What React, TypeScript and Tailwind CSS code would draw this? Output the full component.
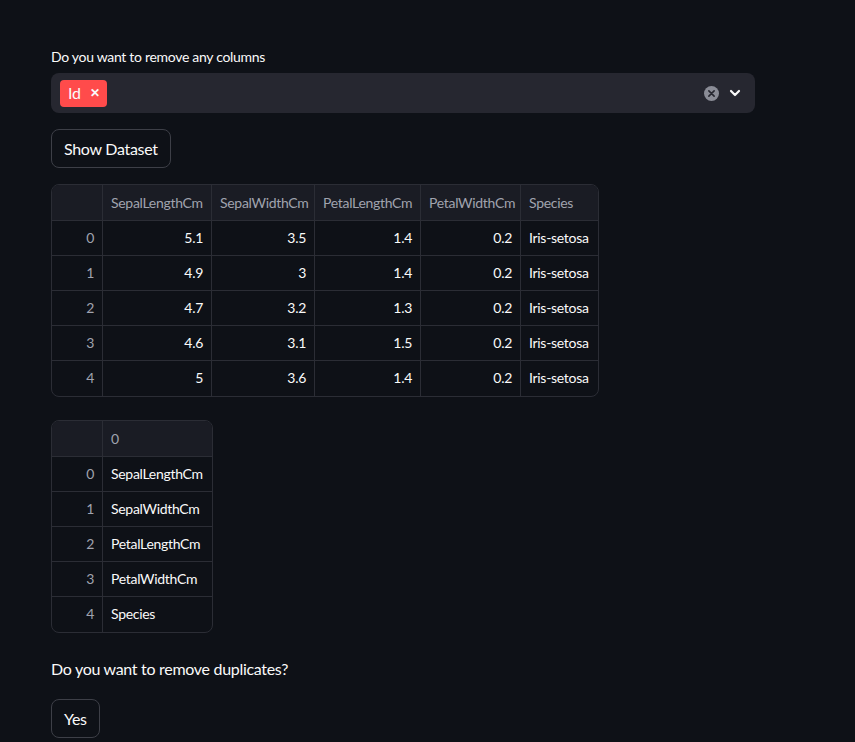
import React from 'react';

const cols = ['SepalLengthCm', 'SepalWidthCm', 'PetalLengthCm', 'PetalWidthCm', 'Species'];
const widths = ['w-[109px]', 'w-[103px]', 'w-[106px]', 'w-[100px]', 'w-[79px]'];
const rows = [
  ['5.1', '3.5', '1.4', '0.2', 'Iris-setosa'],
  ['4.9', '3', '1.4', '0.2', 'Iris-setosa'],
  ['4.7', '3.2', '1.3', '0.2', 'Iris-setosa'],
  ['4.6', '3.1', '1.5', '0.2', 'Iris-setosa'],
  ['5', '3.6', '1.4', '0.2', 'Iris-setosa'],
];

const font = { fontFamily: '"Source Sans Pro", Lato, sans-serif' };

function Button({ label }: { label: string }) {
  return (
    <button className="h-[39px] px-3 rounded-lg border border-[#3d3f47] bg-[#0e1117] text-[16px] text-[#fafafa] leading-none">
      {label}
    </button>
  );
}

export default function App() {
  return (
    <div className="min-h-[742px] bg-[#0e1117] text-[#fafafa] pl-[51px] pt-[49px] whitespace-nowrap tracking-[-0.3px]" style={font}>
      <div className="text-[14px] leading-[16px] mb-[8px]">Do you want to remove any columns</div>
      <div className="w-[704px] h-[40px] rounded-lg bg-[#262730] flex items-center pl-[9px] pr-[14px]">
        <div className="h-[27px] px-[8px] rounded-[4px] bg-[#ff4b4b] flex items-center gap-[9px] text-[16px]">
          <span>Id</span>
          <span className="text-[12px] font-bold">✕</span>
        </div>
        <div className="flex-1" />
        <div className="w-[15px] h-[15px] rounded-full bg-[#8a8c96] flex items-center justify-center mr-[10px]">
          <svg width="7" height="7" viewBox="0 0 8 8"><path d="M1 1 L7 7 M7 1 L1 7" stroke="#262730" strokeWidth="1.8" strokeLinecap="round" /></svg>
        </div>
        <svg width="12" height="12" viewBox="0 0 12 12"><path d="M2 4 L6 8 L10 4" stroke="#fafafa" strokeWidth="2.2" fill="none" strokeLinecap="round" strokeLinejoin="round" /></svg>
      </div>

      <div className="mt-[16px]"><Button label="Show Dataset" /></div>

      <div className="mt-[16px] w-[548px] rounded-lg border border-[#2b2d35] overflow-hidden text-[14px]">
        <div className="flex h-[36px] bg-[#1a1c24] border-b border-[#2b2d35] text-[#a0a3ae]">
          <div className="w-[51px] shrink-0 border-r border-[#2b2d35]" />
          {cols.map((c, i) => (
            <div key={c} className={`${widths[i]} shrink-0 flex items-center px-[8px] pb-[1px] ${i < 4 ? 'border-r border-[#2b2d35]' : ''}`}>{c}</div>
          ))}
        </div>
        {rows.map((r, ri) => (
          <div key={ri} className={`flex h-[35px] ${ri < 4 ? 'border-b border-[#2b2d35]' : ''}`}>
            <div className="w-[51px] shrink-0 border-r border-[#2b2d35] flex items-center justify-end px-[8px] pb-[2px] text-[#a0a3ae]">{ri}</div>
            {r.map((v, i) => (
              <div key={i} className={`${widths[i]} shrink-0 flex items-center px-[8px] pb-[2px] ${i < 4 ? 'justify-end border-r border-[#2b2d35]' : ''}`}>{v}</div>
            ))}
          </div>
        ))}
      </div>

      <div className="mt-[23px] w-[162px] rounded-lg border border-[#2b2d35] overflow-hidden text-[14px]">
        <div className="flex h-[36px] bg-[#1a1c24] border-b border-[#2b2d35] text-[#a0a3ae]">
          <div className="w-[51px] shrink-0 border-r border-[#2b2d35]" />
          <div className="flex-1 flex items-center px-[8px] pb-[1px]">0</div>
        </div>
        {cols.map((c, ri) => (
          <div key={c} className={`flex h-[35px] ${ri < 4 ? 'border-b border-[#2b2d35]' : ''}`}>
            <div className="w-[51px] shrink-0 border-r border-[#2b2d35] flex items-center justify-end px-[8px] pb-[2px] text-[#a0a3ae]">{ri}</div>
            <div className="flex-1 flex items-center px-[8px] pb-[2px]">{c}</div>
          </div>
        ))}
      </div>

      <div className="mt-[26px] text-[16px] leading-[20px]">Do you want to remove duplicates?</div>
      <div className="mt-[20px]"><Button label="Yes" /></div>
    </div>
  );
}
